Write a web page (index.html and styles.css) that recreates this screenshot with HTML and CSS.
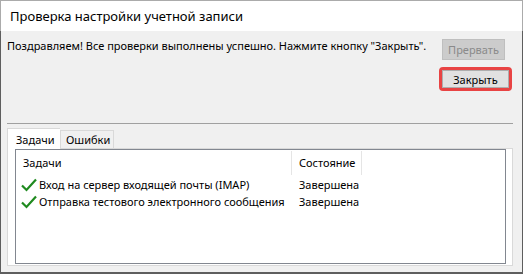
FILE: index.html
```html
<!DOCTYPE html>
<html lang="ru">
<head>
<meta charset="utf-8">
<title>Проверка настройки учетной записи</title>
<link rel="stylesheet" href="styles.css">
</head>
<body>
<div class="window">
  <div class="titlebar">Проверка настройки учетной записи</div>
  <div class="content">
    <div class="top">
      <p class="msg">Поздравляем! Все проверки выполнены успешно. Нажмите кнопку "Закрыть".</p>
      <div class="buttons">
        <button class="btn btn-disabled" disabled>Прервать</button>
        <div class="highlight"><button class="btn btn-close">Закрыть</button></div>
      </div>
    </div>
    <div class="sep"></div>
    <div class="tabs">
      <div class="tabstrip">
        <div class="tab tab-active">Задачи</div>
        <div class="tab">Ошибки</div>
      </div>
      <div class="pane">
        <div class="list">
          <div class="row head">
            <div class="c1">Задачи</div>
            <div class="c2">Состояние</div>
          </div>
          <div class="row item">
            <div class="c1"><svg class="check" width="16" height="14" viewBox="0 0 16 14"><path d="M1 7.5 L5.5 12 L15 1.5" fill="none" stroke="#1f8a1f" stroke-width="2.2" stroke-linejoin="miter"/></svg><span>Вход на сервер входящей почты (IMAP)</span></div>
            <div class="c2">Завершена</div>
          </div>
          <div class="row item">
            <div class="c1"><svg class="check" width="16" height="14" viewBox="0 0 16 14"><path d="M1 7.5 L5.5 12 L15 1.5" fill="none" stroke="#1f8a1f" stroke-width="2.2" stroke-linejoin="miter"/></svg><span>Отправка тестового электронного сообщения</span></div>
            <div class="c2">Завершена</div>
          </div>
        </div>
      </div>
    </div>
  </div>
</div>
</body>
</html>
```

FILE: styles.css
```css
* { box-sizing: border-box; }
html, body { margin: 0; padding: 0; background: #f0f0f0; }
body { font-family: "Noto Sans", "Open Sans", sans-serif; font-size: 11px; color: #000; }

.window {
  width: 523px;
  height: 274px;
  display: flex;
  flex-direction: column;
}

.titlebar {
  height: 31px;
  background: #fff;
  border: 1px solid #ababab;
  border-bottom: none;
  padding-left: 9px;
  font-size: 13px;
  line-height: 31px;
  white-space: nowrap;
}

.content {
  flex: 1;
  display: flex;
  flex-direction: column;
  background: #f0f0f0;
  border-left: 1px solid #5e5e5e;
  border-right: 1px solid #5e5e5e;
  border-bottom: 2px solid #5e5e5e;
  padding: 8px 9px 6px 6px;
}

.top {
  display: flex;
  justify-content: space-between;
  align-items: flex-start;
}

.msg {
  margin: -1px 0 0 0;
  line-height: 16px;
  white-space: nowrap;
}

.buttons {
  flex: none;
  display: flex;
  flex-direction: column;
  align-items: flex-start;
  gap: 7px;
  margin-right: 1px;
}

.btn {
  font-family: inherit;
  font-size: 11px;
  padding: 0;
  margin: 0;
  line-height: 15px;
}

.btn-disabled {
  width: 63px;
  height: 21px;
  margin-left: 3px;
  background: #cccccc;
  border: 1px solid #bfbfbf;
  color: #8a8a8a;
}

.highlight {
  border: 3px solid #e84343;
  border-radius: 4px;
  display: flex;
}

.btn-close {
  width: 67px;
  height: 18px;
  background: #e1e1e1;
  border: 1px solid #adadad;
  color: #000;
}

.sep {
  margin-top: 32px;
  border-top: 1px solid #a0a0a0;
}

.tabs {
  flex: 1;
  display: flex;
  flex-direction: column;
  margin-top: 4px;
}

.tabstrip {
  display: flex;
  align-items: flex-end;
  height: 20px;
}

.tab {
  height: 18px;
  line-height: 17px;
  border: 1px solid #d9d9d9;
  border-bottom: none;
  background: #f0f0f0;
  padding: 0 0 0 5px;
  width: 54px;
}

.tab-active {
  position: relative;
  z-index: 1;
  height: 21px;
  margin-bottom: -1px;
  width: 53px;
  background: #fff;
  padding: 2px 0 0 8px;
  border-right: none;
}

.pane {
  flex: 1;
  display: flex;
  background: #fff;
  border: 1px solid #d9d9d9;
  padding: 0 6px 1px 7px;
}

.list {
  flex: 1;
  border: 1px solid #828790;
  background: #fff;
}

.row {
  display: flex;
}

.head {
  padding: 1px 0;
  height: 26px;
}

.head .c1, .head .c2 {
  line-height: 24px;
  border-right: 1px solid #e5e5e5;
}

.c1 {
  width: 276px;
  padding-left: 7px;
  white-space: nowrap;
  overflow: hidden;
}

.c2 {
  width: 70px;
  padding-left: 7px;
  white-space: nowrap;
}

.item {
  height: 17px;
  line-height: 17px;
}

.item .c1 {
  padding-left: 5px;
  display: flex;
  align-items: center;
  gap: 2px;
}

.check { flex: none; }
```
